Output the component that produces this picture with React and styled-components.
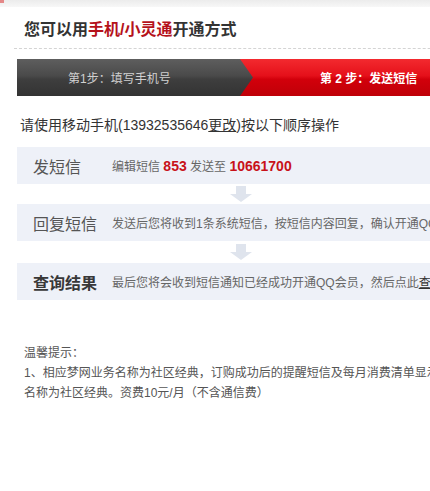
import React from "react";
import styled, { createGlobalStyle } from "styled-components";

const Global = createGlobalStyle`
  html, body { margin: 0; padding: 0; background: #fff; overflow: hidden; }
  body { font-family: "Liberation Sans", "Noto Sans CJK SC", sans-serif; }
`;

const Page = styled.div`
  width: 640px;
  position: relative;
`;

const TopStrip = styled.div`
  height: 7px;
  background: linear-gradient(#ececec, #f7f7f7);
  position: relative;
  &::before {
    content: "";
    position: absolute;
    left: 0;
    top: 0;
    width: 4px;
    height: 3px;
    background: #d44;
    opacity: 0.6;
  }
`;

const Title = styled.h2`
  margin: 0 0 0 14px;
  padding: 13px 0 0 10px;
  height: 28px;
  font-size: 16px;
  line-height: 20px;
  font-weight: bold;
  color: #333;
  border-bottom: 1px dashed #d4d4d4;
`;

const Red = styled.span`
  color: #b5121b;
`;

const Content = styled.div`
  padding-left: 17px;
`;

const StepBar = styled.div`
  margin-top: 10px;
  height: 37px;
  display: flex;
  background: linear-gradient(#f32a2f 0%, #e5101a 45%, #d2000b 55%, #bf0008 100%);
  color: #fff;
  font-size: 12px;
`;

const StepDone = styled.div`
  width: 236px;
  flex: none;
  display: flex;
  align-items: center;
  padding-left: 51px;
  box-sizing: border-box;
  color: #d0d0d0;
  background: linear-gradient(#5e5e5e 0%, #4a4a4a 45%, #3e3e3e 55%, #333 100%);
  clip-path: polygon(0 0, calc(100% - 13px) 0, 100% 50%, calc(100% - 13px) 100%, 0 100%);
`;

const StepCurrent = styled.div`
  flex: 1;
  display: flex;
  align-items: center;
  padding-left: 67px;
  font-weight: bold;
  color: #fff;
`;

const Instruction = styled.p`
  margin: 0 0 12px;
  padding: 19px 0 0 3px;
  height: 20px;
  font-size: 14px;
  line-height: 20px;
  color: #333;
`;

const Link = styled.a`
  color: #333;
  text-decoration: underline;
`;

const Steps = styled.div`
  display: flex;
  flex-direction: column;
`;

const Box = styled.div`
  height: 37px;
  display: flex;
  align-items: center;
  background: #eef1f8;
`;

const Label = styled.div`
  width: 95px;
  flex: none;
  padding-left: 16px;
  box-sizing: border-box;
  font-size: 16px;
  color: ${(p) => (p.$active ? "#383838" : "#555")};
  font-weight: ${(p) => (p.$active ? "bold" : "normal")};
  white-space: nowrap;
`;

const Desc = styled.div`
  font-size: 12px;
  color: #666;
  white-space: nowrap;
`;

const Num = styled.b`
  color: #c8111a;
  font-size: 14px;
  font-weight: bold;
`;

const ArrowRow = styled.div`
  height: ${(p) => p.$h}px;
  display: flex;
  justify-content: center;
  align-items: center;
  width: 448px;
`;

const Notes = styled.div`
  margin-top: 43px;
  padding-left: 7px;
  font-size: 12px;
  line-height: 20px;
  color: #555;
  white-space: nowrap;
`;

const DownArrow = () => (
  <svg width="22" height="16" viewBox="0 0 22 16">
    <path d="M6 0h10v8h6l-11 8L0 8h6z" fill="#dfe4ed" />
  </svg>
);

export default function App() {
  return (
    <Page>
      <Global />
      <TopStrip />
      <Title>
        您可以用<Red>手机/小灵通</Red>开通方式
      </Title>
      <Content>
        <StepBar>
          <StepDone>第1步：填写手机号</StepDone>
          <StepCurrent>第 2 步：发送短信</StepCurrent>
        </StepBar>
        <Instruction>
          请使用移动手机(13932535646<Link>更改</Link>)按以下顺序操作
        </Instruction>
        <Steps>
          <Box>
            <Label>发短信</Label>
            <Desc>
              编辑短信 <Num>853</Num> 发送至 <Num>10661700</Num>
            </Desc>
          </Box>
          <ArrowRow $h={20}>
            <DownArrow />
          </ArrowRow>
          <Box>
            <Label>回复短信</Label>
            <Desc>发送后您将收到1条系统短信，按短信内容回复，确认开通QQ会员</Desc>
          </Box>
          <ArrowRow $h={22}>
            <DownArrow />
          </ArrowRow>
          <Box>
            <Label $active>查询结果</Label>
            <Desc>
              最后您将会收到短信通知已经成功开通QQ会员，然后点此<Link>查看</Link>
            </Desc>
          </Box>
        </Steps>
        <Notes>
          温馨提示：
          <br />
          1、相应梦网业务名称为社区经典，订购成功后的提醒短信及每月消费清单显示
          <br />
          名称为社区经典。资费10元/月（不含通信费）
        </Notes>
      </Content>
    </Page>
  );
}
